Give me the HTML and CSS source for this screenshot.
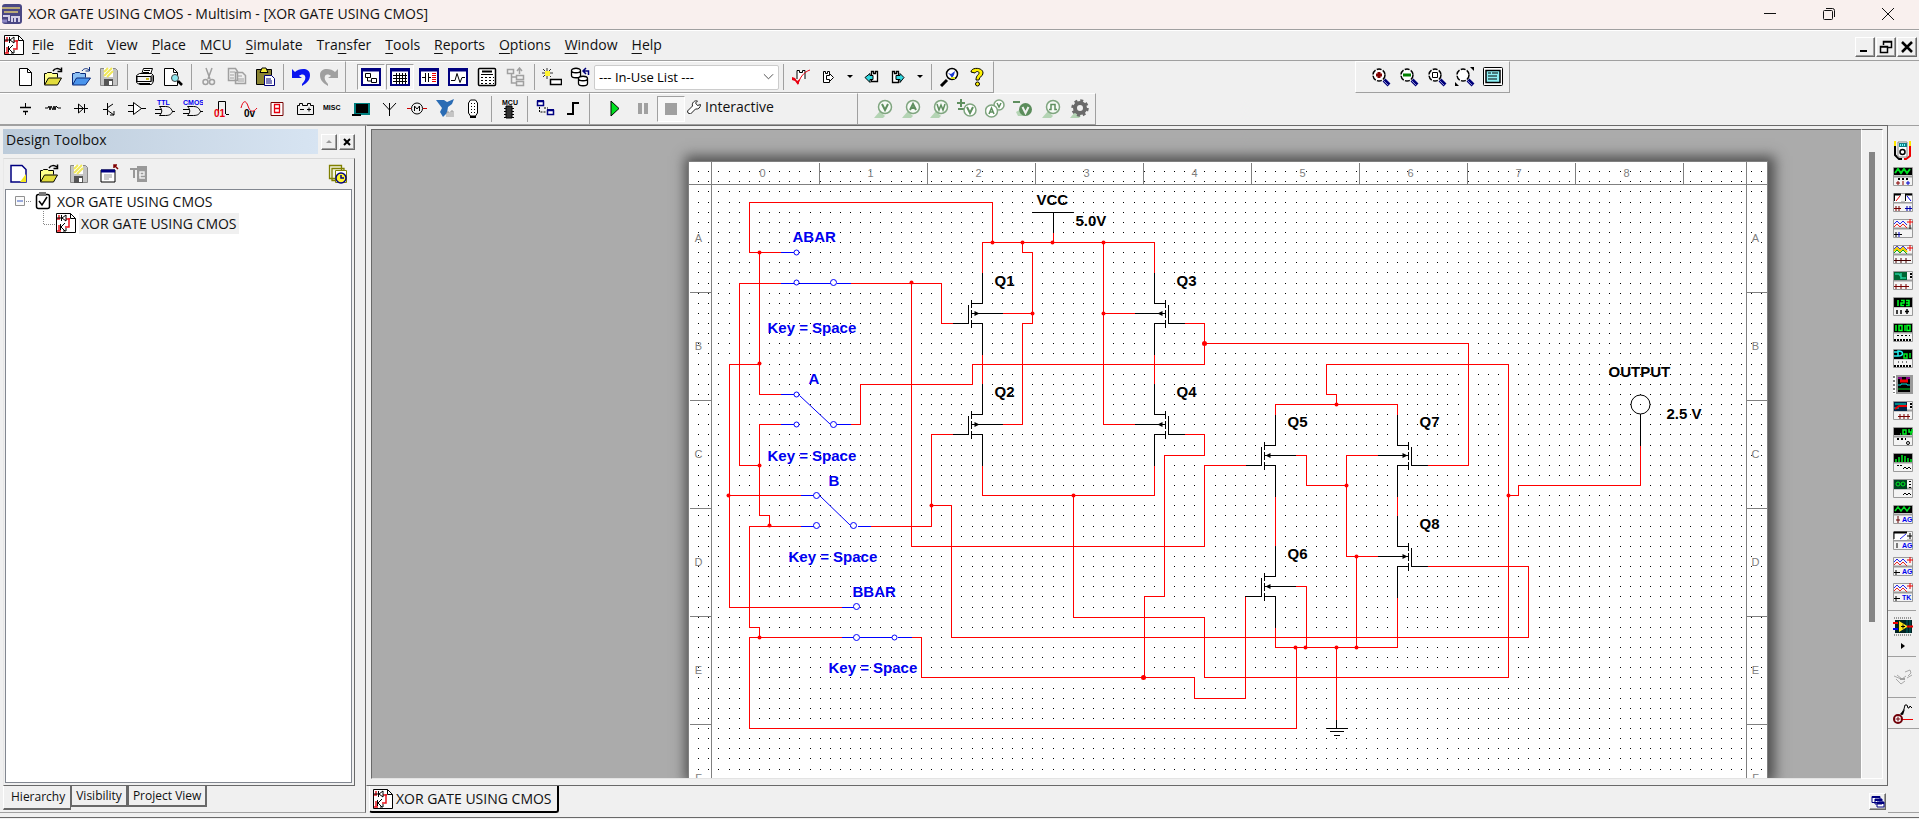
FILE: index.html
```html
<!DOCTYPE html>
<html lang="en">
<head>
<meta charset="utf-8">
<title>XOR GATE USING CMOS - Multisim - [XOR GATE USING CMOS]</title>
<link rel="stylesheet" href="styles.css">
</head>
<body>
<svg class="defs" aria-hidden="true">
  <defs>
    <symbol id="schem" viewBox="0 0 20 20"><path d="M.5 .5h14l5 5v14H.5z" fill="#fff" stroke="#000"/><path d="M14.500 .5v5h5" fill="none" stroke="#000"/><path d="M3 2v4M3 12v6M1 6h3M1 18h4M13 5v9H9M10 6h4" fill="none" stroke="#e8141c" stroke-width="1.500"/><path d="M5.500 2v6M6 5l4-3v6l-4-3M1 5h5M4.500 11v6M5 14l4-4M5 14l4 4M7 18h3v-3" fill="none" stroke="#000"/></symbol>
    <symbol id="page" viewBox="0 0 20 20"><path d="M4.500 1.500h8l4 4v13h-12z" fill="#fff" stroke="#000"/><path d="M12.500 1.500v4h4" fill="none" stroke="#000"/></symbol>
    <symbol id="folder" viewBox="0 0 20 20"><path d="M1.500 17.500v-11h2l1-1h4l1 1h5v4" fill="#ffff8b" stroke="#000"/><path d="M1.500 18l4-7h13l-4 7z" fill="#e2dc3c" stroke="#000"/><path d="M10 4c2-3 5-3 8-1M18.500 .5v4h-4" fill="none" stroke="#000" stroke-width="1.500"/></symbol>
    <symbol id="disk" viewBox="0 0 20 20"><path d="M1.500 1.500h15l2 2v15h-17z" fill="#c4c4c4" stroke="#888"/><path d="M5 1h9v9H5z" fill="#fff"/><path d="M5 9l8-8M5 5l4-4M8 10l6-6" stroke="#f0e85a" stroke-width="2"/><path d="M5 12h9v7H5z" fill="#555"/><path d="M10 14h3v4h-3z" fill="#fff"/></symbol>
    <symbol id="lens" viewBox="0 0 20 20"><circle cx="8" cy="8" r="6" fill="#fff" stroke="#000" stroke-width="1.500" stroke-dasharray="5 1.300"/><path d="M13 13l5 5" stroke="#00007a" stroke-width="4"/><path d="M13 14l4 4" stroke="#8a8ad0"/></symbol>
    <symbol id="inst" viewBox="0 0 20 20"><path d="M.5 .5h19v18H.5z" fill="#f4f4f4" stroke="#9a9a9a"/><path d="M.5 9.500h19" stroke="#9a9a9a" stroke-width="2"/></symbol>
    <symbol id="gate" viewBox="0 0 20 20"><path d="M4.500 7.500h6c5 0 6 3 7 5-1 2-2 4-7 4h-6c3-3 3-6 0-9zM0 10.500h6M0 14.500h6M17 12.500h3" fill="none" stroke="#000"/></symbol>
    <symbol id="probe" viewBox="0 0 20 20"><path d="M1 19l6-7 5 5-2 2z" fill="#b4d4b4"/><circle cx="12" cy="8" r="6.500" fill="#f6faf6" stroke="#7fa57f" stroke-width="1.500"/></symbol>
    <g id="dotrow"><path d="M0 0h1v1H0zM10 0h1v1h-1zM20 0h1v1h-1zM31 0h1v1h-1zM41 0h1v1h-1zM51 0h1v1h-1zM61 0h1v1h-1zM71 0h1v1h-1z"/></g>
    <pattern id="grid" x="10" y="10" width="81" height="81" patternUnits="userSpaceOnUse"><use href="#dotrow"/><use href="#dotrow" y="10"/><use href="#dotrow" y="20"/><use href="#dotrow" y="31"/><use href="#dotrow" y="41"/><use href="#dotrow" y="51"/><use href="#dotrow" y="61"/><use href="#dotrow" y="71"/></pattern>
    <g id="fet"><path class="blk" d="M0-41V-10H-11M-11-14V-6M-11-4V4M-11 6V14M-11 10H0V41M-14-9V10H-30M-11 0H20"/></g>
    <path id="tipout" d="M-8-2.500L-3 0L-8 2.500z"/>
    <path id="tipin" d="M-10 0L-5-2.500V2.500z"/>
  </defs>
</svg>

<header class="titlebar">
  <svg class="i20" viewBox="0 0 20 20"><rect width="20" height="20" rx="3" fill="#4a4784"/><path d="M0 4h18M2 8h14" stroke="#b9a978" stroke-width="2"/><path d="M1 12h6v5M10 18v-5h7v5M13 13v5" stroke="#d4cfe8" stroke-width="2" fill="none"/><path d="M0 17h5" stroke="#8e87c4" stroke-width="3"/></svg>
  <h1>XOR GATE USING CMOS - Multisim - [XOR GATE USING CMOS]</h1>
  <div class="winbtns">
    <button aria-label="Minimize"><svg class="i14" viewBox="0 0 14 14"><path d="M1 6.500h12" stroke="#111"/></svg></button>
    <button aria-label="Restore"><svg class="i14" viewBox="0 0 14 14"><rect x="1.500" y="3.500" width="9" height="9" rx="1" fill="none" stroke="#111"/><path d="M4 1.500h6.500q2 0 2 2V10" fill="none" stroke="#111"/></svg></button>
    <button aria-label="Close"><svg class="i14" viewBox="0 0 14 14"><path d="M1 1l12 12M13 1L1 13" stroke="#111"/></svg></button>
  </div>
</header>

<nav class="menubar">
  <svg class="i20"><use href="#schem"/></svg>
  <button><u>F</u>ile</button><button><u>E</u>dit</button><button><u>V</u>iew</button><button><u>P</u>lace</button><button><u>M</u>CU</button><button><u>S</u>imulate</button><button>Tra<u>n</u>sfer</button><button><u>T</u>ools</button><button><u>R</u>eports</button><button><u>O</u>ptions</button><button><u>W</u>indow</button><button><u>H</u>elp</button>
  <div class="docbtns">
    <button class="raised" aria-label="Minimize document"><svg class="i14" viewBox="0 0 14 14"><path d="M2 11h7" stroke="#000" stroke-width="2"/></svg></button>
    <button class="raised" aria-label="Restore document"><svg class="i14" viewBox="0 0 14 14"><path d="M4.500 5V1.500h8v6H9M4 2h9M1.500 6.500h7v6h-7zM1 7h8" fill="none" stroke="#000" stroke-width="1.500"/></svg></button>
    <button class="raised" aria-label="Close document"><svg class="i14" viewBox="0 0 14 14"><path d="M2 2l10 10M12 2L2 12" stroke="#000" stroke-width="2.500"/></svg></button>
  </div>
</nav>

<div class="toolrow">
  <div class="bar">
    <button aria-label="New"><svg><use href="#page"/></svg></button>
    <button aria-label="Open"><svg><use href="#folder"/></svg></button>
    <button aria-label="Open sample"><svg viewBox="0 0 20 20"><path d="M1.500 17.500v-11h2l1-1h4l1 1h5v4" fill="#8cc0f4" stroke="#0a2a7a"/><path d="M1.500 18l4-7h14l-5 7z" fill="#4a94ec" stroke="#0a2a7a"/><path d="M11 4c2-3 5-3 7-1M18.500 0v4h-4" fill="none" stroke="#0a2a7a"/></svg></button>
    <button aria-label="Save"><svg><use href="#disk"/></svg></button>
    <i class="sep"></i>
    <button aria-label="Print"><svg viewBox="0 0 20 20"><path d="M6.500 7.500l2-6h9l-2 6z" fill="#fff" stroke="#000"/><path d="M9 3.500h6M8 5.500h6" stroke="#000"/><path d="M1.500 8.500l3-2h12l2 2v6l-2 3h-12l-3-2z" fill="#f4f4f4" stroke="#000"/><path d="M2 9.500h14v5H2zM4 16.500h11M17 8v7" fill="none" stroke="#000"/><path d="M11 12h3" stroke="#c8b820" stroke-width="2"/></svg></button>
    <button aria-label="Print preview"><svg viewBox="0 0 20 20"><path d="M1.500 1.500h9l4 4v13h-13z" fill="#fff" stroke="#000"/><path d="M10.500 1.500v4h4" fill="none" stroke="#000"/><circle cx="12" cy="11" r="3.500" fill="#8fe6ee" stroke="#444"/><path d="M15 14l4 4" stroke="#000" stroke-width="2.500"/></svg></button>
    <i class="sep"></i>
    <button aria-label="Cut"><svg viewBox="0 0 20 20"><path d="M7 1l4 11M13 1L9 12" stroke="#a0a0a0" stroke-width="1.500"/><circle cx="6.500" cy="15" r="2.500" fill="none" stroke="#a0a0a0" stroke-width="1.500"/><circle cx="13" cy="15" r="2.500" fill="none" stroke="#a0a0a0" stroke-width="1.500"/></svg></button>
    <button aria-label="Copy"><svg viewBox="0 0 20 20"><path d="M1.500 1.500h7l2 3v9h-9zM8.500 5.500h7l3 3v8h-10z" fill="#eee" stroke="#a0a0a0" stroke-width="1.500"/><path d="M3 5h5M3 8h4M3 11h4M11 9h4M11 12h6M11 14h6" stroke="#a0a0a0"/></svg></button>
    <button aria-label="Paste"><svg viewBox="0 0 20 20"><path d="M1.500 2.500h15v15h-15z" fill="#8a8432" stroke="#000"/><path d="M5 5.500h8L11 1H7z" fill="#f4ec3c" stroke="#000"/><path d="M9.500 8.500h7l3 3v7h-10z" fill="#fff" stroke="#00007a"/><path d="M11 12h5M11 14h6M11 16h6" stroke="#00007a"/></svg></button>
    <i class="sep"></i>
    <button aria-label="Undo"><svg viewBox="0 0 20 20"><path d="M1 11V2l3 3c4-4 15-5 15 3 0 5-3 8-8 11v-2c3-3 4-6 3-8-1-2-4-2-6 0l3 2z" fill="#0a14f0"/></svg></button>
    <button aria-label="Redo"><svg viewBox="0 0 20 20"><path d="M19 11V2l-3 3C12 1 1 0 1 8c0 5 3 8 8 11v-2C6 14 5 11 6 9c1-2 4-2 6 0l-3 2z" fill="#a0a0a0"/></svg></button>
  </div>
  <div class="bar wide">
    <button class="pressed" aria-label="Design toolbox"><svg viewBox="0 0 20 20"><path d="M1 2h18v16H1z" fill="#fff" stroke="#000080" stroke-width="2"/><path d="M1 3h18" stroke="#000080" stroke-width="3"/><path d="M4.500 6.500h5v4h-5zM10.500 11.500h5v4h-5zM6.500 11v3h4" fill="none" stroke="#000"/></svg></button>
    <button class="pressed" aria-label="Spreadsheet view"><svg viewBox="0 0 20 20"><path d="M1 2h18v16H1z" fill="#fff" stroke="#000080" stroke-width="2"/><path d="M1 3h18" stroke="#000080" stroke-width="3"/><path d="M3 8.500h14M3 11.500h14M3 14.500h14M6.500 6v11M9.500 6v11M12.500 6v11M15.500 6v11" stroke="#000"/></svg></button>
    <button aria-label="Netlist viewer"><svg viewBox="0 0 20 20"><path d="M1 2h18v16H1z" fill="#fff" stroke="#000080" stroke-width="2"/><path d="M1 3h18" stroke="#000080" stroke-width="3"/><path d="M3 10.500h3M6.500 6v9M9.500 6v9M10 10.500h2" stroke="#000"/><path d="M13 6.500h4M13 8.500h4M13 10.500h4M13 12.500h4M13 14.500h4" stroke="#e00"/></svg></button>
    <button aria-label="Grapher"><svg viewBox="0 0 20 20"><path d="M1 2h18v16H1z" fill="#fff" stroke="#000080" stroke-width="2"/><path d="M1 3h18" stroke="#000080" stroke-width="3"/><path d="M3 13.500h4l2-7 3 9 2-5h3" fill="none" stroke="#000"/></svg></button>
    <button aria-label="Postprocessor"><svg viewBox="0 0 20 20"><rect x="1.500" y="1.500" width="17" height="17" rx="1" fill="#fff" stroke="#000" stroke-width="1.500"/><path d="M5 4.500h10" stroke="#000" stroke-width="2"/><path d="M4 7.500h12" stroke="#000"/><path d="M4 10.500h13M4 13.500h13M4 16.500h13" stroke="#000" stroke-dasharray="2 2"/></svg></button>
    <button aria-label="Parent sheet"><svg viewBox="0 0 20 20"><path d="M1.500 2.500h6v4h-6zM10.500 8.500h7v4h-7zM10.500 14.500h7v4h-7zM5.500 7v9h5M5.500 10h5M13.500 7V2M11 4l2.500-3 2.500 3" fill="none" stroke="#a0a0a0" stroke-width="1.500"/></svg></button>
    <i class="sep"></i>
    <button aria-label="Component wizard"><svg viewBox="0 0 20 20"><path d="M5 1v11M0 6h11M1 2l8 8M9 2l-8 8" stroke="#000" stroke-width=".8"/><path d="M3 4h5v5H3z" fill="#fff430"/><path d="M8.500 12.500h11v5h-11z" fill="#fff" stroke="#000" stroke-width="1.500"/></svg></button>
    <button aria-label="Database manager"><svg viewBox="0 0 20 20"><path d="M1.500 3.500v5c0 3 9 3 9 0v-5c0-3-9-3-9 0c0 3 9 3 9 0M8.500 11.500v5c0 3 9 3 9 0v-5c0-3-9-3-9 0c0 3 9 3 9 0" fill="#fff" stroke="#000" stroke-width="1.300"/><path d="M18.500 8V4h-5M16 1l-3 3 3 3" fill="none" stroke="#00007a" stroke-width="1.500"/></svg></button>
    <span class="combo"><select aria-label="In-use list"><option>--- In-Use List ---</option></select><svg viewBox="0 0 12 8"><path d="M1 1l5 5 5-5" fill="none" stroke="#444"/></svg></span>
    <i class="sep"></i>
    <button aria-label="Rules check"><svg viewBox="0 0 20 20"><path d="M6 12V3.500h2.500v2h3v-2H14V12" fill="#fff" stroke="#000"/><path d="M4 12l3 5C9 10 13 5 19 3" fill="none" stroke="#e80010"/><path d="M1 10l3 1 2 3 3-2-2 6-3-4-3-1z" fill="#e80010"/></svg></button>
    <button aria-label="Transfer to layout"><svg viewBox="0 0 20 20"><path d="M4.500 15.500v-11h2v2h2v-2h2v11z" fill="#fff" stroke="#000"/><path d="M7.500 8.500h3v-2l4 4-4 4v-2h-3z" fill="#fff" stroke="#000"/></svg></button>
    <button class="caret" aria-label="Transfer options"><svg viewBox="0 0 6 4"><path d="M0 0h6L3 3z"/></svg></button>
    <button aria-label="Back annotate"><svg viewBox="0 0 20 20"><path d="M10.500 14.500v-10h2v2h2v-2h2v10z" fill="#fff" stroke="#000" stroke-width="1.300"/><path d="M12 8.500H9v-2l-5 4 5 5v-3h3z" fill="#30d8e0" stroke="#000"/></svg></button>
    <button aria-label="Forward annotate"><svg viewBox="0 0 20 20"><path d="M3.500 15.500v-11h2v2h2v-2h2v11z" fill="#fff" stroke="#000" stroke-width="1.300"/><path d="M7 8.500h4v-2l4 4-4 5v-3H7z" fill="#30d8e0" stroke="#000"/></svg></button>
    <button class="caret" aria-label="Annotate options"><svg viewBox="0 0 6 4"><path d="M0 0h6L3 3z"/></svg></button>
    <i class="sep"></i>
    <button aria-label="Find examples"><svg viewBox="0 0 20 20"><circle cx="13" cy="7" r="5.500" fill="#fff" stroke="#000" stroke-width="1.500"/><path d="M8 13l-6 6" stroke="#000" stroke-width="3"/><path d="M9 6l3 1 4-3-1 4-2 3-2-3z" fill="#1a3ad0"/><path d="M12 10h4v2h-4z" fill="#d8e020"/></svg></button>
    <button aria-label="Help"><svg viewBox="0 0 20 20"><path d="M4 5c0-5 12-5 12 1 0 4-4 3-4 7H9c0-5 3-5 3-7 0-2-3-2-4 0z" fill="#fff200" stroke="#000"/><circle cx="10.500" cy="17" r="2" fill="#fff200" stroke="#000"/></svg></button>
  </div>
  <div class="bar zoombar">
    <button aria-label="Zoom in"><svg viewBox="0 0 20 20"><use href="#lens"/><path d="M5 8h6M8 5v6" stroke="#800000" stroke-width="3"/></svg></button>
    <button aria-label="Zoom out"><svg viewBox="0 0 20 20"><use href="#lens"/><path d="M4 8h8" stroke="#008000" stroke-width="3"/></svg></button>
    <button aria-label="Zoom area"><svg viewBox="0 0 20 20"><use href="#lens"/><path d="M5.500 5.500h5v5h-5z" fill="none" stroke="#000"/></svg></button>
    <button aria-label="Zoom sheet"><svg viewBox="0 0 20 20"><use href="#lens"/><path d="M15 0h4v4zM0 15v4h4z"/></svg></button>
    <button aria-label="Full screen"><svg viewBox="0 0 20 20"><rect x=".5" y=".5" width="19" height="18" rx="1" fill="#fff" stroke="#000"/><path d="M3 3.500h14v12H3z" fill="#8ef0f4" stroke="#000" stroke-width="1.500"/><path d="M5 6h3M9 6h6M5 9h9M5 12h9" stroke="#000"/></svg></button>
  </div>
</div>

<div class="toolrow second">
  <div class="bar">
    <button aria-label="Source"><svg viewBox="0 0 20 20"><path d="M10.500 4v4M10.500 13v3" stroke="#000"/><path d="M5 8.500h11M8 12.500h5" stroke="#000" stroke-width="1.500"/></svg></button>
    <button aria-label="Basic"><svg viewBox="0 0 20 20"><path d="M2 9h3l1-2 1 4 1-4 2 4 1-4 1 4 1-4 2 2h3" fill="none" stroke="#000"/></svg></button>
    <button aria-label="Diode"><svg viewBox="0 0 20 20"><path d="M3 9.500h14M7.500 5v9l5-4.500zM13.500 5v9" fill="none" stroke="#000"/></svg></button>
    <button aria-label="Transistor"><svg viewBox="0 0 20 20"><path d="M4 10.500h4M8.500 4v12M8 9l6-4M8 11l7 5M15 12v4h-4" fill="none" stroke="#000"/></svg></button>
    <button aria-label="Analog"><svg viewBox="0 0 20 20"><path d="M6.500 3.500v12l8-6zM1 6.500h5M1 12.500h5M14 9.500h5" fill="#fff" stroke="#000"/></svg></button>
    <button aria-label="TTL"><svg viewBox="0 0 20 20"><text x="2" y="6" class="tiny blue">TTL</text><use href="#gate"/></svg></button>
    <button aria-label="CMOS"><svg viewBox="0 0 20 20"><text x="0" y="6" class="tiny blue">CMOS</text><use href="#gate"/></svg></button>
    <button aria-label="Misc digital"><svg viewBox="0 0 20 20"><path d="M7.500 14V2.500h7V15M15 15.500h3" fill="none" stroke="#000"/><text x="3" y="18" class="tiny ten red">01</text></svg></button>
    <button aria-label="Mixed"><svg viewBox="0 0 20 20"><path d="M2 9c2-8 5-8 7-2s5 7 9 2" fill="none" stroke="#e80010"/><text x="5" y="18" class="tiny ten">0v</text></svg></button>
    <button aria-label="Indicator"><svg viewBox="0 0 20 20"><path d="M4 3.500h12v13H4z" fill="#fff" stroke="#700"/><path d="M7.500 5.500h5v8h-5zM8 9.500h5" fill="none" stroke="#e80010" stroke-width="1.300"/></svg></button>
    <button aria-label="Power"><svg viewBox="0 0 20 20"><path d="M2.500 6.500h2v-2h3v2h5v-2h3v2h3v9h-16zM5 10.500h4M12 10.500h4M14 8.500v4" fill="none" stroke="#000"/></svg></button>
    <button aria-label="Misc"><svg viewBox="0 0 20 20"><text x="0" y="11" class="tiny">MISC</text></svg></button>
    <button aria-label="Advanced peripherals"><svg viewBox="0 0 20 20"><path d="M3 4h16v12H3z" fill="#008080"/><path d="M5 5h12v9H5zM1 15h9v2H1z" fill="#000"/></svg></button>
    <button aria-label="RF"><svg viewBox="0 0 20 20"><path d="M10.500 4v13M4 4l6.500 7L17 4" fill="none" stroke="#000"/></svg></button>
    <button aria-label="Electromechanical"><svg viewBox="0 0 20 20"><circle cx="10" cy="9.500" r="5.500" fill="none" stroke="#000"/><path d="M7.500 12V7l2.500 3 2.500-3v5" fill="none" stroke="#000"/><path d="M0 9.500h4M16 9.500h4" stroke="#c00"/></svg></button>
    <button aria-label="NI component"><svg viewBox="0 0 20 20"><path d="M1 1h8l3 2 7-3-2 5-4 3-1 6-4 4-3-5 2-4-3-4z" fill="#2a6cb4"/><path d="M12 18v-5h2v5M16 18v-6h2v6" fill="none" stroke="#999"/></svg></button>
    <button aria-label="Connector"><svg viewBox="0 0 20 20"><path d="M5.500 14V4l2-3h5l2 3v10l-2 3h-5z" fill="#fff" stroke="#000"/><path d="M8.500 4v10M11.500 4v10" stroke="#000" stroke-dasharray="1 2"/><path d="M7 17h6v2H7z"/></svg></button>
    <i class="sep"></i>
    <button aria-label="MCU"><svg viewBox="0 0 20 20"><text x="3" y="6" class="tiny">MCU</text><path d="M7 7h6v12H7z" fill="#333" stroke="#000"/><path d="M5 9.500h12M5 12.500h12M5 15.500h12M5 18.500h12" stroke="#000" stroke-dasharray="2 6"/></svg></button>
    <i class="sep"></i>
    <button aria-label="Hierarchical block"><svg viewBox="0 0 20 20"><path d="M2.500 2.500h6v4h-6zM12.500 11.500h6v4h-6z" fill="#fff" stroke="#000080" stroke-width="1.500"/><path d="M2 2h7M12 11h7" stroke="#000080" stroke-width="2"/><path d="M4.500 8v5h7M9 9h4" fill="none" stroke="#000" stroke-dasharray="2 1"/></svg></button>
    <button aria-label="Bus"><svg viewBox="0 0 20 20"><path d="M4 15h6V4h6" fill="none" stroke="#000" stroke-width="2"/></svg></button>
  </div>
  <div class="bar sim">
    <button aria-label="Run"><svg viewBox="0 0 20 20"><path d="M6 2l8 7.500L6 17z" fill="#00e020" stroke="#000"/></svg></button>
    <button aria-label="Pause"><svg viewBox="0 0 20 20"><path d="M5 4h4v11H5zM11 4h4v11h-4z" fill="#a0a0a0"/></svg></button>
    <button class="pressed" aria-label="Stop"><svg viewBox="0 0 20 20"><path d="M4 4h12v12H4z" fill="#a0a0a0"/></svg></button>
    <button class="labelled"><svg class="i14" viewBox="0 0 14 14"><path d="M1 13l-.5-2 5-5c-1-3 2-6 5-5L8.500 3l2 2.500 3-1c0 3-2 5-5 4.500l-5 5z" fill="#fff" stroke="#222"/></svg>Interactive</button>
  </div>
  <div class="bar">
    <button aria-label="Voltage probe"><svg viewBox="0 0 20 20"><use href="#probe"/><path d="M9 5l3 6 3-6" fill="none" stroke="#5f8f5f" stroke-width="2"/></svg></button>
    <button aria-label="Current probe"><svg viewBox="0 0 20 20"><use href="#probe"/><path d="M9 11l3-6 3 6M10 9h4" fill="none" stroke="#5f8f5f" stroke-width="2"/></svg></button>
    <button aria-label="Power probe"><svg viewBox="0 0 20 20"><use href="#probe"/><path d="M8 5l2 6 2-5 2 5 2-6" fill="none" stroke="#5f8f5f" stroke-width="1.500"/></svg></button>
    <button aria-label="Differential probe"><svg viewBox="0 0 20 20"><path d="M4 0v8M0 4h8M1 10h6" stroke="#5f8f5f" stroke-width="2"/><circle cx="13" cy="11" r="6" fill="#fff" stroke="#7fa57f" stroke-width="1.500"/><path d="M10 8l3 6 3-6" fill="none" stroke="#5f8f5f" stroke-width="2"/></svg></button>
    <button aria-label="Voltage and current probe"><svg viewBox="0 0 20 20"><circle cx="14" cy="6" r="5" fill="#fff" stroke="#7fa57f" stroke-width="1.500"/><circle cx="6.500" cy="12" r="6" fill="#fff" stroke="#7fa57f" stroke-width="1.500"/><path d="M4 15l2.500-6L9 15M5 13h3M12 4l2 4 2-4" fill="none" stroke="#5f8f5f" stroke-width="1.500"/></svg></button>
    <button aria-label="Reference probe"><svg viewBox="0 0 20 20"><path d="M0 3h7" stroke="#5f8f5f" stroke-width="2"/><path d="M3 13l5-3 4 7H5z" fill="#b4d4b4"/><circle cx="12.500" cy="10.500" r="6.500" fill="#5b8c5b"/><path d="M9.500 8l3 6 3-6" fill="none" stroke="#f0f0f0" stroke-width="2"/></svg></button>
    <button aria-label="Digital probe"><svg viewBox="0 0 20 20"><use href="#probe"/><path d="M8 10.500h2v-5h4v5h2" fill="none" stroke="#5f8f5f" stroke-width="1.500"/></svg></button>
    <button aria-label="Probe settings"><svg viewBox="0 0 20 20"><path d="M1 19l6-7 5 5-2 2z" fill="#b4d4b4"/><circle cx="11" cy="9" r="5" fill="none" stroke="#6a6a6a" stroke-width="4"/><circle cx="11" cy="9" r="7.500" fill="none" stroke="#6a6a6a" stroke-width="2.500" stroke-dasharray="3 2.890"/></svg></button>
  </div>
</div>

<main class="body">
  <aside class="toolbox">
    <div class="caption"><h2>Design Toolbox</h2>
      <button class="raised" aria-label="Roll up"><svg class="i10" viewBox="0 0 10 10"><path d="M2 6l3-3 3 3z" fill="#999"/></svg></button>
      <button class="raised" aria-label="Close toolbox"><svg class="i10" viewBox="0 0 10 10"><path d="M2 2l6 6M8 2L2 8" stroke="#000" stroke-width="2"/></svg></button>
    </div>
    <div class="panel">
      <div class="ptools">
        <button aria-label="New design"><svg viewBox="0 0 20 20"><path d="M2 1.500h11l4 4V18H2z" fill="#fff" stroke="#000080" stroke-width="1.500"/><path d="M17 10v8h-6z" fill="#f4e820"/></svg></button>
        <button aria-label="Open design"><svg><use href="#folder"/></svg></button>
        <button aria-label="Save design"><svg><use href="#disk"/></svg></button>
        <button aria-label="Close design"><svg viewBox="0 0 20 20"><path d="M2 6h14v12H2z" fill="#fff" stroke="#000"/><path d="M2 7h14" stroke="#000080" stroke-width="3"/><path d="M5 11h8M5 13h8M5 15h5" stroke="#999"/><path d="M15 1l4 4M15 4V1h3" stroke="#800000" stroke-width="1.500" fill="none"/></svg></button>
        <button aria-label="Rename"><svg viewBox="0 0 20 20"><path d="M8 2h10v16H8z" fill="#999"/><path d="M1 5h8M5 5v9" stroke="#999" stroke-width="2"/><path d="M10 11h5V8h-4v6h5" fill="none" stroke="#eee" stroke-width="1.500"/></svg></button>
        <button class="last" aria-label="Archive"><svg viewBox="0 0 20 20"><path d="M1.500 1.500h12v13h-12zM4 4.500h12v12H4z" fill="#f4f4e0" stroke="#808000" stroke-width="1.300"/><path d="M7.500 6.500h11v12h-11z" fill="#fff" stroke="#808000"/><circle cx="13" cy="14" r="5" fill="#fff430" stroke="#000080" stroke-width="1.500"/><path d="M13 11v3h3" fill="none" stroke="#000080" stroke-width="1.500"/></svg></button>
      </div>
      <ul class="tree">
        <li><svg class="twig" viewBox="0 0 20 20"><path d="M.5 5.500h9v9h-9z" fill="#fafafa" stroke="#919191"/><path d="M2 10h6" stroke="#3a5ac0"/><path d="M11 10.500h6" stroke="#888" stroke-dasharray="1 1"/></svg><svg class="i16" viewBox="0 0 16 18"><rect x="1.500" y="2.500" width="13" height="14" rx="2" fill="#fff" stroke="#000" stroke-width="1.500"/><path d="M4 0h7v4H4z" fill="#777"/><path d="M4 9l3 4 5-8" fill="none" stroke="#000" stroke-width="1.500"/></svg><span>XOR GATE USING CMOS</span></li>
        <li class="child"><svg class="twig" viewBox="0 0 20 20"><path d="M7.500-2v13M8 11.500h12" stroke="#888" stroke-dasharray="1 1"/></svg><svg class="i20"><use href="#schem"/></svg><span class="sel">XOR GATE USING CMOS</span></li>
      </ul>
    </div>
    <div class="ptabs"><button class="on">Hierarchy</button><button>Visibility</button><button>Project View</button></div>
  </aside>

  <section class="workspace">
    <div class="frame">
      <div class="canvas">
        <svg class="sheet">
          <rect width="1080" height="640" fill="#fff"/>
          <rect width="1080" height="640" fill="url(#grid)"/>
          <g transform="translate(-687.5 -160.5)">
            <path class="rule" d="M688 778V161H1767V778M688 184H1767M711 161V778M1746 161V778M819 162V184M927 162V184M1035 162V184M1143 162V184M1251 162V184M1359 162V184M1467 162V184M1575 162V184M1683 162V184M689 292H711M689 400H711M689 508H711M689 616H711M689 724H711M1746 292H1767M1746 400H1767M1746 508H1767M1746 616H1767M1746 724H1767"/>
            <g class="mark"><text x="762" y="176">0</text><text x="870" y="176">1</text><text x="978" y="176">2</text><text x="1086" y="176">3</text><text x="1194" y="176">4</text><text x="1302" y="176">5</text><text x="1410" y="176">6</text><text x="1518" y="176">7</text><text x="1626" y="176">8</text>
            <text x="698" y="241">A</text><text x="698" y="349">B</text><text x="698" y="457">C</text><text x="698" y="565">D</text><text x="698" y="673">E</text><text x="698" y="781">F</text>
            <text x="1755" y="241">A</text><text x="1755" y="349">B</text><text x="1755" y="457">C</text><text x="1755" y="565">D</text><text x="1755" y="673">E</text><text x="1755" y="781">F</text></g>
            <path class="wire" d="M780 252H749V202H992V242M759 252V394H780M780 283H739V465H759M759 364H729V607H841M780 424H759V515H769V526M850 283H941V323H952M911 283V546H1204V465H1246M850 424H860V384H972V364H1204V323H1184M1204 343H1468V465H1427M1053 232V242M982 272V242H1154V272M1022 242V252H1032V323H1022V424H1002M1032 313H1002M1103 242V424H1135M1103 313H1135M982 353V384M1154 353V384M952 434H931V526H870M931 505H951V637H1528V566H1427M982 465V495H1154V465M1073 495V617H1204V677H1508V364H1326V394H1336V404M1275 414V404H1397V414M1184 434H1204V455H1164V596H1144V677M800 495H729M800 526H749V627H759V637M841 637H749V728H1296V647M911 637H921V677H1194V698H1245V596M1295 455H1306V485H1346M1378 455H1346V556H1378M1356 556V647M1275 495V546M1397 495V515M1295 586H1306V647M1275 627V647H1397V596M1336 647V719M1508 495H1518V485H1640V445"/>
            <g fill="#f00"><circle cx="759" cy="252" r="2"/><circle cx="759" cy="363" r="2"/><circle cx="759" cy="465" r="2"/><circle cx="911" cy="282" r="2"/><circle cx="992" cy="242" r="2"/><circle cx="1022" cy="242" r="2"/><circle cx="1052" cy="242" r="2"/><circle cx="1103" cy="242" r="2"/><circle cx="1032" cy="313" r="2"/><circle cx="1103" cy="313" r="2"/><circle cx="728" cy="495" r="2"/><circle cx="769" cy="525" r="2"/><circle cx="759" cy="637" r="2"/><circle cx="931" cy="505" r="2"/><circle cx="1073" cy="495" r="2"/><circle cx="1143" cy="677" r="2.500"/><circle cx="1204" cy="343" r="2.500"/><circle cx="1336" cy="404" r="2"/><circle cx="1346" cy="485" r="2"/><circle cx="1356" cy="556" r="2"/><circle cx="1295" cy="647" r="2"/><circle cx="1305" cy="647" r="2"/><circle cx="1336" cy="647" r="2"/><circle cx="1356" cy="647" r="2"/><circle cx="1508" cy="495" r="2"/></g>
            <path class="sw" d="M780 252H793M780 283H793M799 283H830M836 283H850M780 394H793M780 424H793M836 424H850M800 495H813M800 526H813M857 526H870M841 607H853M841 637H853M859 637H891M897 637H911"/>
            <path class="swd" d="M799 395L830 424M819 495L850 525"/>
            <g class="sp"><circle cx="796" cy="252" r="2.500"/><circle cx="796" cy="282" r="2.500"/><circle cx="833" cy="282" r="3"/><circle cx="796" cy="394" r="2.500"/><circle cx="796" cy="424" r="2.500"/><circle cx="833" cy="424" r="3"/><circle cx="816" cy="495" r="3"/><circle cx="816" cy="525" r="3"/><circle cx="853" cy="525" r="3"/><circle cx="856" cy="606" r="3"/><circle cx="856" cy="637" r="3"/><circle cx="894" cy="637" r="2.500"/></g>
            <g transform="translate(982 313)"><use href="#fet"/><use href="#tipout"/></g>
            <g transform="translate(982 424)"><use href="#fet"/><use href="#tipout"/></g>
            <g transform="translate(1154 313) scale(-1 1)"><use href="#fet"/><use href="#tipout"/></g>
            <g transform="translate(1154 424) scale(-1 1)"><use href="#fet"/><use href="#tipout"/></g>
            <g transform="translate(1275 455)"><use href="#fet"/><use href="#tipin"/></g>
            <g transform="translate(1275 586)"><use href="#fet"/><use href="#tipin"/></g>
            <g transform="translate(1397 455) scale(-1 1)"><use href="#fet"/><use href="#tipin"/></g>
            <g transform="translate(1397 556) scale(-1 1)"><use href="#fet"/><use href="#tipin"/></g>
            <path class="blk" d="M1032 212H1073M1053 212V232M1640 414V445M1336 719V728M1326 728H1347M1329 731H1343M1333 735H1339"/>
            <circle cx="1640" cy="404" r="9.500" fill="none" stroke="#000"/>
            <g class="lab"><text x="1036" y="204">VCC</text><text x="1075" y="225">5.0V</text><text x="994" y="285">Q1</text><text x="994" y="396">Q2</text><text x="1176" y="285">Q3</text><text x="1176" y="396">Q4</text><text x="1287" y="426">Q5</text><text x="1287" y="558">Q6</text><text x="1419" y="426">Q7</text><text x="1419" y="528">Q8</text><text x="1608" y="376">OUTPUT</text><text x="1666" y="418">2.5 V</text></g>
            <g class="lab blue"><text x="792" y="241">ABAR</text><text x="767" y="332">Key = Space</text><text x="808" y="383">A</text><text x="767" y="460">Key = Space</text><text x="828" y="485">B</text><text x="788" y="561">Key = Space</text><text x="852" y="596">BBAR</text><text x="828" y="672">Key = Space</text></g>
          </g>
        </svg>
      </div>
      <div class="vscroll"><div class="thumb"></div></div>
    </div>
    <div class="doctabs">
      <button class="doctab"><svg class="i20"><use href="#schem"/></svg>XOR GATE USING CMOS</button>
      <button class="raised winlist" aria-label="Window list"><svg class="i14" viewBox="0 0 14 14"><path d="M1 1.500h8v6H1zM4 4h7v5H4zM6 7h7v5H6z" fill="#fff" stroke="#000080"/><path d="M1 2h8M4 5h7M6 8h7" stroke="#000080" stroke-width="2"/></svg></button>
    </div>
  </section>

  <aside class="side">
    <div class="instruments">
      <button aria-label="Multimeter"><svg viewBox="0 0 20 20"><path d="M2 0v5M17 0v5" stroke="#ffe600" stroke-width="2"/><path d="M2 5v9l4 4h3" fill="none" stroke="#000" stroke-width="2"/><path d="M17 5v10l-4 3h-2" fill="none" stroke="#e00" stroke-width="2"/><path d="M5 1h9v15H5z" fill="#fff" stroke="#888"/><path d="M6 2h8v4H6z" fill="#108088"/><path d="M7 4h6" stroke="#7ff" stroke-width="2" stroke-dasharray="1 1"/><circle cx="9.500" cy="11" r="2.500" fill="#fff" stroke="#000" stroke-width="1.500"/></svg></button>
      <button aria-label="Function generator"><svg viewBox="0 0 20 20"><use href="#inst"/><path d="M1 1h18v7H1z"/><path d="M2 6l3-4 3 4 3-4 3 4 3-4" fill="none" stroke="#0d2" stroke-width="2"/><path d="M5 12h10" stroke="#000" stroke-width="2" stroke-dasharray="2 2"/><path d="M5 14v4M3 16h4M10 14v4" stroke="#800"/><path d="M15 14v4M13 16h4" stroke="#00c"/></svg></button>
      <button aria-label="Wattmeter"><svg viewBox="0 0 20 20"><use href="#inst"/><path d="M1 1h7v8H1zM12 1h7v8h-7z" fill="#fff"/><path d="M1 1.500h7M12 1.500h7" stroke="#000" stroke-width="2"/><path d="M1.500 1v7M12.500 1v7" stroke="#000"/><path d="M3 8l4-5" stroke="#e00"/><path d="M18 8l-4-5" stroke="#00e"/><path d="M1 15.500h7M3 13v5M6 13v5" stroke="#700"/><path d="M12 15.500h7M14 13v5M17 13v5" stroke="#00a"/></svg></button>
      <button aria-label="Oscilloscope"><svg viewBox="0 0 20 20"><use href="#inst"/><path d="M1 5l3-3 3 3 3-3 4 4" fill="none" stroke="#22e"/><path d="M1 8l3-3 3 3 3-3 4 4" fill="none" stroke="#e22"/><path d="M17 0v6M14 3h6" stroke="#e00"/><path d="M17 6v4M1 15.500h8M3 13v5" stroke="#000"/><path d="M6 13v5" stroke="#00c"/></svg></button>
      <button aria-label="Four channel oscilloscope"><svg viewBox="0 0 20 20"><use href="#inst"/><path d="M1 4l3-3 3 3 3-3 4 4" fill="none" stroke="#22e"/><path d="M1 6l3-3 3 3 3-3 4 4" fill="none" stroke="#ec0" stroke-width="2"/><path d="M1 8l3-3 3 3 3-3 4 4" fill="none" stroke="#0a2"/><path d="M17 0v6M14 3h6" stroke="#e00"/><path d="M1 15.500h17M3 13v5M8 13v5M13 13v5" stroke="#400"/></svg></button>
      <button aria-label="Bode plotter"><svg viewBox="0 0 20 20"><use href="#inst"/><path d="M1 1h13v8H1z" fill="#063"/><path d="M2 3h4l3 4h4M8 2v6" fill="none" stroke="#2c9" stroke-width="1.500"/><path d="M17 3h2M17 6h2" stroke="#000" stroke-width="2"/><path d="M1 15.500h15M3 13v5M8 13v5M13 13v5" stroke="#700"/></svg></button>
      <button aria-label="Frequency counter"><svg viewBox="0 0 20 20"><use href="#inst"/><path d="M1 1h18v9H1z"/><path d="M5 3v6M8 3.500h3V6H8v2.500h3M13 3.500h3v5h-3M13 6h3" fill="none" stroke="#0f2" stroke-width="1.500"/><path d="M4 13v4M8 13v4M14 12v5M12 14.500h4" stroke="#000" stroke-width="1.500"/></svg></button>
      <button aria-label="Word generator"><svg viewBox="0 0 20 20"><use href="#inst"/><path d="M1 1h18v8H1z"/><path d="M3 2v6M6 2.500h3v5H6zM12 2v6M14 2.500h3v5h-3z" fill="none" stroke="#0f2" stroke-width="1.500"/><path d="M4 12.500h13" stroke="#000" stroke-dasharray="2 2"/><path d="M1 17h18" stroke="#000" stroke-width="2" stroke-dasharray="2 1"/></svg></button>
      <button aria-label="Logic converter"><svg viewBox="0 0 20 20"><use href="#inst"/><path d="M1 1h18v9H1z"/><path d="M1 3h4v4H1M5 2c6 0 6 5 0 5z" fill="none" stroke="#2ee" stroke-width="1.500"/><path d="M11 5h3v4h-3zM17 4v5" fill="none" stroke="#0e2" stroke-width="1.500"/><path d="M5 13h10" stroke="#000" stroke-dasharray="1 3"/><path d="M1 17h18" stroke="#000" stroke-width="2" stroke-dasharray="2 1"/></svg></button>
      <button aria-label="Logic analyzer"><svg viewBox="0 0 20 20"><path d="M0 0h20v19H0z" fill="#999"/><path d="M0 0h3v19H0z" fill="#fff"/><path d="M1 1v17" stroke="#000" stroke-dasharray="2 2"/><path d="M5 2h12v15H5z"/><path d="M5 3h3v3h6V3h3" fill="none" stroke="#808" stroke-width="2"/><path d="M7 6h8" stroke="#e00" stroke-width="3"/><path d="M5 10h3v-1h6v1h3" fill="none" stroke="#0dd"/><path d="M5 14h12" stroke="#0c2"/></svg></button>
      <button aria-label="IV analyzer"><svg viewBox="0 0 20 20"><use href="#inst"/><path d="M1 1h13v9H1z" fill="#024"/><path d="M2 3h11M1 7h5" stroke="#088" stroke-width="2"/><path d="M2 8l4-3h8" fill="none" stroke="#e00" stroke-width="2"/><path d="M17 3h2M17 6h2" stroke="#000" stroke-width="2"/><path d="M5 15.500h12M7 13v5M11 13v5M15 13v5" stroke="#700"/></svg></button>
      <button aria-label="Distortion analyzer"><svg viewBox="0 0 20 20"><use href="#inst"/><path d="M1 1h18v7H1z"/><path d="M7 7h1M10 3h3v4h-3zM16 2v3h3V2M18 5v3" fill="none" stroke="#0e2" stroke-width="1.500"/><path d="M4 12h9" stroke="#000" stroke-width="2" stroke-dasharray="2 2"/><circle cx="15" cy="16" r="1.500" fill="none" stroke="#000"/></svg></button>
      <button aria-label="Spectrum analyzer"><svg viewBox="0 0 20 20"><use href="#inst"/><path d="M1 1h18v8H1z"/><path d="M3 9V6M6 9V4M9 9V2M12 9V3M15 9V5M18 9V6" stroke="#0e2" stroke-width="1.500"/><path d="M4 12.500h5" stroke="#000" stroke-dasharray="2 1"/><path d="M10 16l2-2 2 2 2-2 2 2" fill="none" stroke="#000"/></svg></button>
      <button aria-label="Network analyzer"><svg viewBox="0 0 20 20"><use href="#inst"/><path d="M1 1h13v9H1z" fill="#042"/><path d="M3 5a2 2 0 0 1 4 0a2 2 0 0 1-4 0M8 5a2 2 0 0 1 4 0a2 2 0 0 1-4 0" fill="none" stroke="#0e2"/><path d="M17 2v7" stroke="#000" stroke-width="2" stroke-dasharray="1 2"/><path d="M10 16l2-2 2 2 2-2 2 2" fill="none" stroke="#000"/></svg></button>
      <button aria-label="Agilent function generator"><svg viewBox="0 0 20 20"><use href="#inst"/><path d="M1 1h18v7H1z"/><path d="M2 6l3-4 3 4 3-4 3 4 3-4" fill="none" stroke="#0d2" stroke-width="1.500"/><path d="M5 11v7M3 15h4" stroke="#600"/><text x="9" y="17" class="tiny blue">AG</text></svg></button>
      <button aria-label="Agilent multimeter"><svg viewBox="0 0 20 20"><use href="#inst"/><path d="M1 1h13v8H1z" fill="#fff"/><path d="M1 1.500h13" stroke="#000" stroke-width="2"/><path d="M1 1v7" stroke="#000"/><path d="M7 8l6-5" stroke="#22e"/><path d="M14 5h5M17 2v6M4 12v5" stroke="#000"/><text x="9" y="17" class="tiny blue">AG</text></svg></button>
      <button aria-label="Agilent oscilloscope"><svg viewBox="0 0 20 20"><use href="#inst"/><path d="M1 5l3-3 3 3 3-3 4 4" fill="none" stroke="#22e"/><path d="M1 8l3-3 3 3 3-3 4 4" fill="none" stroke="#e22"/><path d="M17 0v6M14 3h6" stroke="#e00"/><path d="M1 15.500h6M3 13v5" stroke="#000"/><text x="9" y="17" class="tiny blue">AG</text></svg></button>
      <button aria-label="Tektronix oscilloscope"><svg viewBox="0 0 20 20"><use href="#inst"/><path d="M1 5l3-3 3 3 3-3 4 4" fill="none" stroke="#22e"/><path d="M1 8l3-3 3 3 3-3 4 4" fill="none" stroke="#e22"/><path d="M17 0v6M14 3h6" stroke="#e00"/><path d="M1 15.500h6M3 13v5" stroke="#000"/><text x="9" y="17" class="tiny blue">TK</text></svg></button>
      <i class="hsep"></i>
      <button aria-label="LabVIEW instruments"><svg viewBox="0 0 20 20"><path d="M1 1h18M1 18h18" stroke="#999" stroke-width="2" stroke-dasharray="1 1"/><path d="M2 3h17v13H2z" fill="#022"/><path d="M14 3v13M17 3v13" stroke="#066"/><path d="M6 4l9 5.500L6 15z" fill="#ffe81a"/><path d="M8 9.500h4M10 7.500v4" stroke="#000"/><path d="M0 6h5M14 9.500h6" stroke="#e00" stroke-width="2"/><path d="M0 12h5" stroke="#00e" stroke-width="2"/></svg></button>
      <button class="more" aria-label="More instruments"><svg viewBox="0 0 4 6"><path d="M0 0l4 3-4 3z"/></svg></button>
      <i class="hsep"></i>
      <button class="tall" aria-label="NI ELVISmx"><svg viewBox="0 0 20 20"><path d="M1 9l7 3M4 8l5 4 4-3M3 12l5 5 4-3M12 5l5-2 1 3-3 3M14 11l5-3" fill="none" stroke="#a8a8a8"/><path d="M7 11h5v2H7z" fill="#a0a0a0"/></svg></button>
      <i class="hsep"></i>
      <button aria-label="Current clamp"><svg viewBox="0 0 20 20"><path d="M9 15.500h11" stroke="#e00"/><circle cx="5" cy="15" r="4" fill="#fff" stroke="#700008" stroke-width="2"/><path d="M2.500 15h5M5 12.500v5" stroke="#700008"/><path d="M8 11l3-6 1-4h2l1 3h1l1-2 2 2" fill="none" stroke="#000"/><path d="M7 10l3 1 2-6z"/></svg></button>
    </div>
    <div class="sidefoot"></div>
  </aside>
</main>
<footer class="status"></footer>
</body>
</html>
```
FILE: styles.css
```css
* { box-sizing: border-box; }
body { margin: 0; height: 100vh; display: flex; flex-direction: column; overflow: hidden; background: #f0f0f0; color: #111; font: 14px/20px "Open Sans", "Noto Sans", sans-serif; }
button { font: inherit; color: inherit; background: none; border: 0; padding: 0; margin: 0; display: flex; align-items: center; justify-content: center; white-space: nowrap; }
svg { display: block; flex: none; }
h1, h2 { margin: 0; font-size: 14px; font-weight: 400; white-space: nowrap; }
.defs { position: absolute; width: 0; height: 0; }
.i20 { width: 20px; height: 20px; }
.i16 { width: 16px; height: 18px; }
.i14 { width: 14px; height: 14px; }
.i10 { width: 10px; height: 10px; }
.tiny { font: bold 7px "Liberation Sans", Arial, sans-serif; }
.ten { font-size: 10px; }
.blue { fill: #0000f0; }
.red { fill: #e80010; }

.titlebar { display: flex; align-items: center; gap: 6px; height: 30px; padding: 0 2px 2px; background: #f9f0ee; border-bottom: 1px solid #a0a0a0; }
.winbtns { display: flex; margin-left: auto; }
.winbtns button { width: 59px; height: 27px; }

.menubar { display: flex; align-items: center; height: 31px; padding: 0 2px 2px 4px; border-top: 1px solid #fff; border-bottom: 1px solid #a0a0a0; }
.menubar > svg { margin-right: 1px; }
.menubar > button { padding: 0 7px; }
.menubar u { text-underline-offset: 3px; }
.docbtns { display: flex; gap: 1px; margin-left: auto; padding-top: 4px; }
.docbtns button { width: 20px; height: 20px; }
.raised { border: 1px solid; border-color: #fff #696969 #696969 #fff; box-shadow: inset -1px -1px #a0a0a0; }

.toolrow { display: flex; height: 32px; }
.bar { display: flex; align-items: center; height: 32px; padding: 0 2px 0 11px; border-right: 1px solid #a0a0a0; border-bottom: 1px solid #a0a0a0; border-top: 1px solid #fff; }
.bar button { width: 28px; height: 26px; }
.bar button > svg { width: 20px; height: 20px; }
.wide > button:nth-child(-n+5) { margin-right: 1px; }
.sep { width: 8px; height: 26px; display: flex; justify-content: center; }
.sep::before { content: ""; width: 1px; background: #a0a0a0; }
.bar .pressed { border: 1px solid; border-color: #a0a0a0 #fff #fff #a0a0a0; background: #f7f7f7; }
.bar .caret { width: 14px; }
.bar .caret > svg { width: 6px; height: 4px; }
.combo { position: relative; width: 185px; height: 25px; }
.combo select { appearance: none; width: 100%; height: 100%; padding: 0 20px 0 4px; border: 1px solid #ccc; border-radius: 2px; background: #fff; color: #000; font: 13px/20px "Open Sans", "Noto Sans", sans-serif; }
.combo svg { position: absolute; right: 5px; top: 8px; width: 11px; height: 8px; }
.zoombar { margin-left: auto; margin-right: 409px; border-left: 1px solid #fff; }
.sim { width: 268px; }
.bar .labelled { width: auto; gap: 4px; padding: 0 0 4px 2px; }
.bar .labelled > svg { width: 14px; height: 14px; }

.body { flex: 1; min-height: 0; display: flex; }
.toolbox { width: 366px; display: flex; flex-direction: column; padding: 3px 10px 4px 3px; margin-bottom: 4px; border-top: 1px solid #a0a0a0; border-right: 1px solid #696969; border-bottom: 1px solid #a0a0a0; }
.caption { display: flex; align-items: center; gap: 2px; height: 25px; margin-bottom: 4px; }
.caption h2 { flex: 1; height: 25px; padding-left: 3px; line-height: 22px; background: linear-gradient(90deg, #bccbda, #d7e4f2); margin-right: 1px; }
.caption button { width: 16px; height: 16px; }
.panel { flex: 1; display: flex; flex-direction: column; border: 1px solid; border-color: #d8d8d8 #696969 #696969 #e8e8e8; padding: 0 2px 2px 1px; }
.ptools { display: flex; align-items: center; height: 30px; gap: 2px; padding-right: 4px; }
.ptools button { width: 28px; height: 26px; }
.ptools svg { width: 20px; height: 20px; }
.ptools .last { margin-left: auto; width: 20px; }
.tree { flex: 1; margin: 0; padding: 0 0 0 9px; list-style: none; background: #fff; border: 1px solid #828790; }
.tree li { display: flex; align-items: center; height: 22px; }
.tree span { padding: 0 2px; margin-left: 4px; line-height: 21px; }
.tree .child { padding-left: 21px; }
.tree .child span { margin-left: 3px; }
.tree .sel { background: #f0f0f0; }
.twig { width: 20px; height: 20px; overflow: visible; }
.ptabs { display: flex; align-items: flex-start; height: 22px; font-size: 12px; }
.ptabs button { height: 21px; padding: 0 4px; border: 1px solid #696969; border-width: 0 2px 2px 1px; }
.ptabs .on { height: 24px; padding: 0 5px 0 7px; border-left-color: #fff; border-right-width: 1px; }

.workspace { flex: 1; min-width: 0; display: flex; flex-direction: column; }
.frame { flex: 1; min-height: 0; display: flex; border: 1px solid #696969; border-left-color: #f0f0f0; padding: 3px 4px 6px; }
.canvas { flex: 1; min-width: 0; overflow: hidden; padding: 31px 0 0 316px; background: #ababab; border-top: 1px solid #696969; border-left: 1px solid #696969; border-bottom: 1px solid #e3e3e3; }
.sheet { width: 1080px; height: 100%; box-shadow: 2px 0 12px 5px #505050; }
.vscroll { width: 22px; padding: 22px 0 0 7px; border-top: 1px solid #696969; border-right: 1px solid #fff; border-bottom: 1px solid #fff; border-left: 1px solid #fff; }
.thumb { width: 6px; height: 75%; background: #858585; }
.rule, .wire, .blk, .sw { fill: none; shape-rendering: crispEdges; stroke-width: 1px; }
.rule { stroke: #808080; }
.wire { stroke: #f00; }
.blk { stroke: #000; }
.sw, .swd { stroke: #00f; }
.sp { fill: #fff; stroke: #00f; }
.mark { font: 11px "Liberation Sans", Arial, sans-serif; fill: #808080; text-anchor: middle; }
.lab { font: bold 15px "Liberation Sans", Arial, sans-serif; }
.doctabs { display: flex; align-items: flex-start; height: 31px; padding-left: 3px; }
.doctab { height: 27px; gap: 3px; padding: 0 5px 0 3px; border: 1px solid #000; border-width: 0 2px 2px 1px; border-left-color: #fff; border-radius: 0 0 3px 3px; }
.winlist { width: 17px; height: 17px; margin: 7px 2px 0 auto; }

.side { width: 31px; display: flex; flex-direction: column; }
.instruments { display: flex; flex-direction: column; align-items: center; padding: 12px 2px 1px 0; border-top: 1px solid #a0a0a0; border-bottom: 1px solid #a0a0a0; }
.instruments button { width: 28px; height: 26px; }
.instruments button > svg { width: 20px; height: 20px; }
.instruments .more { height: 12px; }
.instruments .more > svg { width: 4px; height: 6px; }
.instruments .tall { height: 33px; }
.hsep { align-self: stretch; height: 8px; margin-right: 1px; display: flex; align-items: center; }
.hsep::before { content: ""; flex: 1; height: 1px; background: #a0a0a0; }
.sidefoot { flex: 1; border-bottom: 1px solid #a0a0a0; margin-bottom: 4px; }
.status { height: 2px; border-top: 1px solid #696969; }
```
